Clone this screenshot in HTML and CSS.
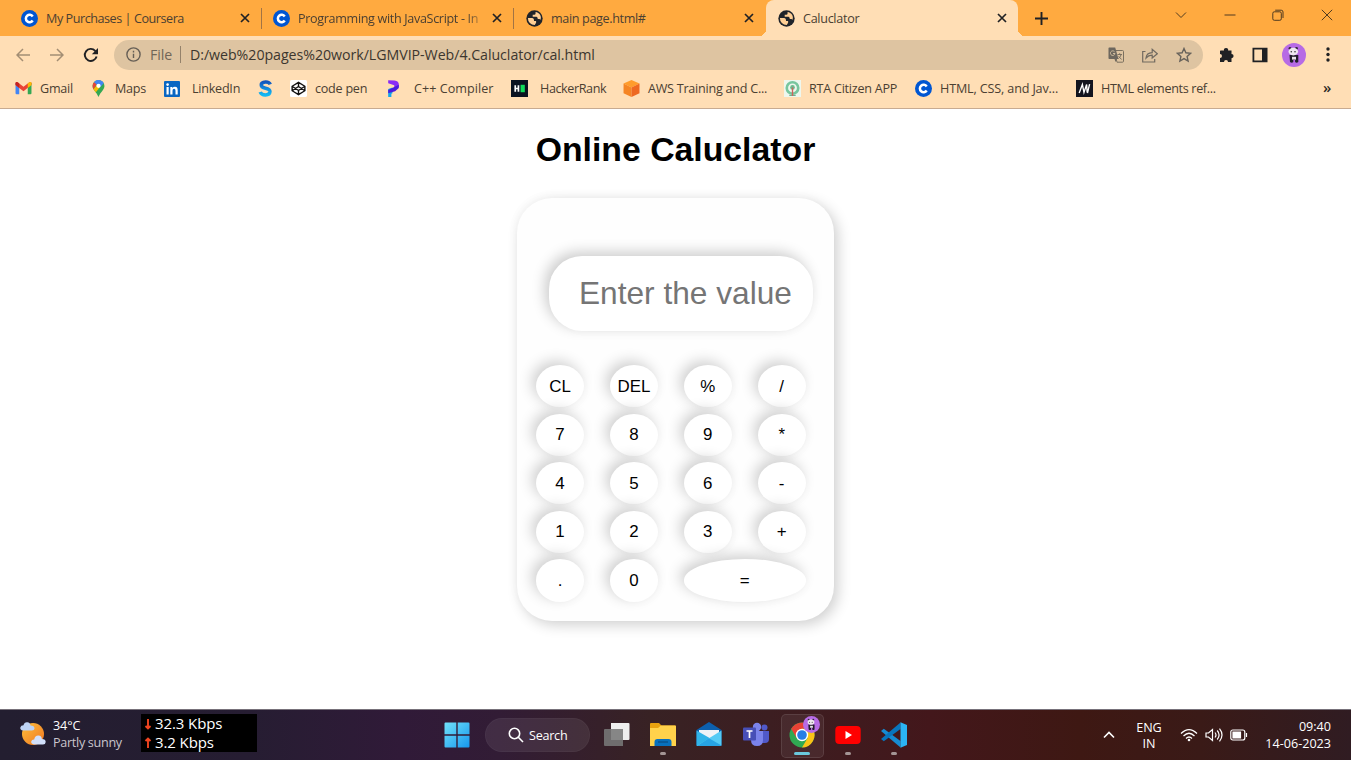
FILE: index.html
```html
<!DOCTYPE html>
<html lang="en">
<head>
<meta charset="utf-8">
<title>Caluclator</title>
<link rel="stylesheet" href="styles.css">
</head>
<body>
<svg width="0" height="0" class="defs">
  <defs>
    <symbol id="coursera" viewBox="0 0 17 17"><circle cx="8.5" cy="8.5" r="8.5" fill="#0056d2"/><path d="M11.7 6.5A3.7 3.7 0 1 0 11.7 10.5" fill="none" stroke="#fff" stroke-width="2.5"/></symbol>
    <symbol id="globe" viewBox="0 0 16 16"><circle cx="8" cy="8" r="7.7" fill="#20242a"/><path d="M1.8 7.6h4q1.500 0 1.700 1.500v1.200h2v1.800l-1.300 2A6.300 6.300 0 0 1 1.800 7.600ZM9 1.800v1.500q0 1.200-1.300 1.200H6.300v1.800h3.600q1.200.2 1.200 2.200h1.400q.8 0 1 .8C15.200 5.800 12.600 2.300 9 1.800Z" fill="#ffcf95"/></symbol>
    <symbol id="close" viewBox="0 0 10 10"><path d="m1 1 8 8m0-8-8 8" stroke="#202124" stroke-width="1.7" fill="none"/></symbol>
    <symbol id="panda" viewBox="0 0 24 24"><circle cx="12" cy="12" r="12" fill="#b76be5"/><circle cx="8" cy="5.300" r="1.400" fill="#32283b"/><circle cx="14.500" cy="5.300" r="1.400" fill="#32283b"/><path d="M7.500 12h8.800v7q-1.800 1.500-3.200 0v-2h-1.800v2q-1.500 1.500-3.300 0Z" fill="#211d29"/><ellipse cx="11.300" cy="8.600" rx="4.800" ry="3.800" fill="#eee8ef"/><circle cx="9.300" cy="8.800" r=".8" fill="#333"/><circle cx="13" cy="8.800" r=".8" fill="#333"/><path d="M10 13.800h4v2.800h-4z" fill="#e9e2ea"/></symbol>
  </defs>
</svg>

<header class="browser">
  <div class="tabs">
    <div class="tab"><svg class="fav"><use href="#coursera"/></svg><span class="tab-title">My Purchases | Coursera</span><svg class="x"><use href="#close"/></svg></div>
    <div class="tab"><svg class="fav"><use href="#coursera"/></svg><span class="tab-title fade">Programming with JavaScript - In</span><svg class="x"><use href="#close"/></svg></div>
    <div class="tab last"><svg class="fav"><use href="#globe"/></svg><span class="tab-title">main page.html#</span><svg class="x"><use href="#close"/></svg></div>
    <div class="tab active"><svg class="fav"><use href="#globe"/></svg><span class="tab-title">Caluclator</span><svg class="x"><use href="#close"/></svg></div>
    <svg class="plus" viewBox="0 0 13 13"><path d="M6.5 0v13M0 6.5h13" stroke="#202124" stroke-width="1.9"/></svg>
    <div class="window-buttons">
      <svg viewBox="0 0 12 12"><path d="m1 3.5 5 5 5-5"/></svg>
      <svg viewBox="0 0 12 12"><path d="M.5 6h11"/></svg>
      <svg viewBox="0 0 12 12"><rect x=".8" y="2.8" width="8.5" height="8.5" rx="1.5"/><path d="M3.2 1.2h6q1.8 0 1.8 1.8v6"/></svg>
      <svg viewBox="0 0 12 12"><path d="m.8.8 10.4 10.4m0-10.4L.8 11.2"/></svg>
    </div>
  </div>

  <div class="toolbar">
    <svg class="nav dim" viewBox="0 0 14 14"><path d="M14 7H1m6-6L1 7l6 6"/></svg>
    <svg class="nav dim" viewBox="0 0 14 14"><path d="M0 7h13M7 1l6 6-6 6"/></svg>
    <svg class="nav reload" viewBox="0 0 16 16"><path d="M13.6 9.5A6 6 0 1 1 12.2 3.8L14 5.6"/><path class="solid" d="M15 1v6.2H8.8Z"/></svg>
    <div class="omnibox">
      <svg class="info" viewBox="0 0 15 15"><circle cx="7.5" cy="7.5" r="6.6"/><path d="M7.5 6.7v4.3M7.5 3.8v1.6"/></svg>
      <span class="scheme">File</span><i class="bar"></i><span class="url">D:/web%20pages%20work/LGMVIP-Web/4.Caluclator/cal.html</span>
      <div class="actions">
        <svg viewBox="0 0 16 16"><path d="M6 3.5h8.5q1 0 1 1v9.700q0 1-1 1H9L6 3.5Z" fill="none" stroke="#7b705f"/><path d="M1.200.500h6L10.500 12h-9.300Q.5 12 .5 11.300V1.200Q.5.500 1.200.500ZM9 12l-1.500 3-1-3Z" fill="#6d675e"/><path d="M6.500 4.700A2.300 2.300 0 1 0 7 6.500H5" fill="none" stroke="#cfbb9c"/><path d="M9.500 7.500h4.500m-2.300-1.300v1.300m1.500 0q-.8 2.600-2.700 4m.1-2.200 3 3.200" fill="none" stroke="#7b705f"/></svg>
        <svg viewBox="0 0 16 16"><path d="M3.500 4.500H.700V15h12v-3M4 11q.5-5 6.200-5.300V2.300L15.300 6.700l-5.100 4.200V8.100Q6.500 8 4 11Z" fill="none" stroke="#716a60" stroke-width="1.200"/></svg>
        <svg viewBox="0 0 16 16"><path d="m8 1.500 1.900 4.300 4.700.5-3.500 3.100 1 4.600L8 11.600 3.900 14l1-4.600-3.500-3.100 4.700-.5Z" fill="none" stroke="#67625b" stroke-width="1.400"/></svg>
      </div>
    </div>
    <svg class="tool puzzle" viewBox="0 0 16 16"><path d="M1.500 3.500H5a2.100 2.100 0 1 1 4.100 0h3.400V7a2.100 2.100 0 1 1 0 4.200V15H9a2 2 0 1 0-4 0H1V11a2 2 0 1 0 0-4V4Z" fill="#202124"/></svg>
    <svg class="tool panel" viewBox="0 0 16 16"><path fill-rule="evenodd" d="M.5.800h15v14.400H.5ZM2.300 2.600v10.800H10V2.600Z" fill="#202124"/></svg>
    <svg class="avatar"><use href="#panda"/></svg>
    <svg class="dots" viewBox="0 0 4 15"><circle cx="2" cy="2" r="1.700"/><circle cx="2" cy="7.500" r="1.700"/><circle cx="2" cy="13" r="1.700"/></svg>
  </div>

  <nav class="bookmarks">
    <a class="bm gmail"><svg viewBox="0 0 16 16"><path d="M.5 2.500 4 5v8.500H1.500q-1 0-1-1Z" fill="#4285f4"/><path d="M15.500 2.500 12 5v8.500h2.500q1 0 1-1Z" fill="#34a853"/><path d="M.5 4V3q0-1.500 2-1L8 6.400 13.500 2q2-.5 2 1v1.500L8 10.500.500 5Z" fill="#ea4335"/><path d="M12 3.200 13.500 2q2-.5 2 1v1.800L12 7.500Z" fill="#fbbc04"/><path d="M.5 4.500V3q.2-1.500 2-.8L4 3.300V7.500Z" fill="#c5221f"/></svg>Gmail</a>
    <a class="bm maps"><svg viewBox="0 0 16 16"><path d="M8 0a5.600 5.600 0 0 1 5.600 5.600C13.600 9 10 11 8 16 6 11 2.400 9 2.400 5.600A5.600 5.600 0 0 1 8 0Z" fill="#34a853"/><path d="M3.700 2A5.600 5.600 0 0 1 9.500.200L5.700 5Z" fill="#4285f4"/><path d="M3.700 2 6.300 4.200 3.200 8.600Q1.500 5 3.700 2Z" fill="#ea4335"/><path d="m3.200 8.600 3.400-4L10.800 5 5.500 11.500Z" fill="#fbbc04"/><path d="M9.500.200q2.300.5 3.500 2.600L9.900 6.500 8 3.600 5.900 4Z" fill="#4285f4"/><circle cx="8" cy="5.500" r="2" fill="#fff"/></svg>Maps</a>
    <a class="bm linkedin"><svg viewBox="0 0 16 16"><rect width="16" height="16" rx="1" fill="#0a66c2"/><path d="M2.500 6h2.200v7.500H2.500ZM6.300 6h2.100v1.200Q9.200 5.800 11 5.800q2.700 0 2.700 3.400v4.300h-2.200V9.700q0-2-1.400-2-1.600 0-1.600 2v3.800H6.300Z" fill="#fff"/><circle cx="3.600" cy="3.600" r="1.300" fill="#fff"/></svg>LinkedIn</a>
    <a class="bm scaler"><svg viewBox="0 0 16 16"><defs><linearGradient id="sg" x2="0" y2="1"><stop stop-color="#1356bd"/><stop offset=".5" stop-color="#138bdd"/><stop offset="1" stop-color="#13b9f3"/></linearGradient></defs><path d="M12.500 4.200Q11.500 1.700 8 1.800 3.900 2 4 4.700 4 7 8 7.700q4.300.8 4.200 3.300Q12 14 8 14.100 4 14.200 3 11.300" fill="none" stroke="url(#sg)" stroke-width="3.300"/></svg></a>
    <a class="bm codepen"><svg viewBox="0 0 16 16"><rect width="16" height="16" rx="1.500" fill="#fff"/><path d="m8 2.200 6 3.700v4.200l-6 3.700-6-3.700V5.900ZM2 5.900l6 4 6-4M2 10.100l6-4 6 4M8 2.200v3.900m0 3.800v3.900" fill="none" stroke="#111" stroke-width="1.300"/></svg>code pen</a>
    <a class="bm cpp"><svg viewBox="0 0 16 16"><path d="M3 8.500 7 7v5.500L6 13v3H3Z" fill="#12a6ed"/><path d="M3 .3 9 .500q4 .8 4 3.500v2.500L8.700 8V5L3 3Z" fill="#8a2cf5"/><path d="m3 9.500 10-5v3L9.500 10.500 3 12.500Z" fill="#4b1bdc"/></svg>C++ Compiler</a>
    <a class="bm hacker"><svg viewBox="0 0 16 16"><path fill="#0b1320" d="M0 0h16v16H0z"/><path d="M4 5v6m3-6v6M4 8h3" stroke="#fff" stroke-width="1.600"/><path fill="#10dc5a" d="M9 4.500h4v7H9z"/></svg>HackerRank</a>
    <a class="bm aws"><svg viewBox="0 0 16 16"><path d="m8 0 7.500 3.300L8 7 .5 3.300Z" fill="#ff9c2b"/><path d="M.5 3.300 8 7v9L.5 12.500Z" fill="#f58524"/><path d="M15.500 3.300 8 7v9l7.500-3.500Z" fill="#ee6820"/></svg>AWS Training and C...</a>
    <a class="bm rta"><svg viewBox="0 0 16 16"><path fill="#eef7ee" d="M0 0h16v16H0z"/><circle cx="8" cy="7.500" r="5.400" fill="none" stroke="#77c69e" stroke-width="2.500"/><path d="M5 14.500h6" stroke="#64ae87"/><circle cx="8" cy="7" r="2.200" fill="#6db98f"/><path d="M8 7v8" stroke="#cf635c" stroke-width="1.300"/></svg>RTA Citizen APP</a>
    <a class="bm html"><svg><use href="#coursera"/></svg>HTML, CSS, and Jav...</a>
    <a class="bm mdn"><svg viewBox="0 0 16 16"><path fill="#14151f" d="M0 0h16v16H0z"/><path d="M3 12.300 6 4.200l1.500 7.500L10 4.200l.5 7.500M12.800 3.800 10.800 12.300" fill="none" stroke="#fff" stroke-width="1.300"/></svg>HTML elements ref...</a>
    <span class="more">»</span>
  </nav>
</header>

<main class="page">
  <h1>Online Caluclator</h1>
  <form class="calculator">
    <input class="display" type="text" placeholder="Enter the value">
    <div class="keys">
      <button type="button">CL</button><button type="button">DEL</button><button type="button">%</button><button type="button">/</button>
      <button type="button">7</button><button type="button">8</button><button type="button">9</button><button type="button">*</button>
      <button type="button">4</button><button type="button">5</button><button type="button">6</button><button type="button">-</button>
      <button type="button">1</button><button type="button">2</button><button type="button">3</button><button type="button">+</button>
      <button type="button">.</button><button type="button">0</button><button type="button" class="equals">=</button>
    </div>
  </form>
</main>

<footer class="taskbar">
  <div class="weather">
    <svg viewBox="0 0 26 26"><defs><linearGradient id="sun" x2="1" y2="1"><stop stop-color="#ffc03a"/><stop offset="1" stop-color="#ef7622"/></linearGradient></defs><circle cx="13" cy="13" r="11" fill="url(#sun)"/><path d="M3 9.500Q0 9.200.3 6.500.8 4.400 3.500 4.300 4.300 1 7.300 1.300q3 .4 3.200 3.200 4 .1 4 2.900-.1 2.100-2.500 2.100Z" fill="#bdd3f5"/><path d="M14 23.500q-3-.3-2.800-2.900.4-2.300 3-2.200.7-4 4.400-3.800 3 .3 3.300 3.300 3.800.2 3.800 3-.2 2.600-2.700 2.600Z" fill="#d1e0fb"/></svg>
    <p><span>34°C</span><span class="soft">Partly sunny</span></p>
  </div>
  <div class="speed">
    <p><svg viewBox="0 0 8 12"><path d="M4 1v9M1.500 8 4 10.500 6.500 8"/></svg>32.3 Kbps</p>
    <p><svg viewBox="0 0 8 12"><path d="M4 11V2M1.500 4 4 1.500 6.500 4"/></svg>3.2 Kbps</p>
  </div>
  <div class="apps">
    <svg class="start" viewBox="0 0 26 26"><defs><linearGradient id="win" gradientUnits="userSpaceOnUse" x2="26" y2="26"><stop stop-color="#73e4fa"/><stop offset="1" stop-color="#1495ed"/></linearGradient></defs><path d="M1.500.5h10.800v11.800H.5V1.500q0-1 1-1Zm12.200 0h10.800q1 0 1 1v10.800H13.700ZM.5 13.700h11.800v11.800H1.500q-1 0-1-1Zm13.200 0h11.800v10.800q0 1-1 1H13.700Z" fill="url(#win)"/></svg>
    <div class="search"><svg viewBox="0 0 16 16"><circle cx="6.500" cy="6.500" r="5.200"/><path d="m10.300 10.300 4.700 4.700"/></svg>Search</div>
    <svg class="app" viewBox="0 0 26 26"><path d="M7 1h17.500q1 0 1 1v15q0 1-1 1H7Z" fill="#eee"/><path d="M1 7h18v17H1q-1 0-1-1V8q0-1 1-1Z" fill="#787878" opacity=".88"/></svg>
    <div class="running"><svg class="app" viewBox="0 0 26 26"><path d="M1 1h8l2.500 2.500H25q1 0 1 1V23q0 1-1 1H1q-1 0-1-1V2q0-1 1-1Z" fill="#e8a20f"/><path d="M0 6h8l3-2.500h14q1 0 1 1V24H0Z" fill="#ffd24b"/><path d="M4.500 24v-4q0-3 3-3h11q3 0 3 3v4Z" fill="#0870bd"/><path d="M8 20h10" stroke="#074c84" stroke-width="1.200"/></svg></div>
    <svg class="app" viewBox="0 0 26 26"><path d="M.5 8 13 0l12.500 8v15q0 1-1 1h-23q-1 0-1-1Z" fill="#0c5fad"/><path d="M3 8h20v5L13 17 3 13Z" fill="#eef3f7"/><path d="M.5 8.500 17 18v6H1.500q-1 0-1-1Z" fill="#31b4e8"/><path d="M25.500 8.500.5 24h24q1 0 1-1Z" fill="#54cbf5"/><path d="m13 16.200 12.500 7.400-1 .4H1Z" fill="#27a4e4"/></svg>
    <svg class="app" viewBox="0 0 26 26"><circle cx="21.500" cy="5.500" r="3" fill="#5059c9"/><path d="M18 9h8v8q0 4-4 4h-4Z" fill="#5059c9"/><circle cx="14" cy="5" r="4.200" fill="#7b83eb"/><path d="M8 9h12v9q0 6-6 6t-6-6Z" fill="#7b83eb"/><rect y="5.500" width="13" height="13" rx="1" fill="#474fb7"/><path d="M3.500 9h6M6.500 9v7" stroke="#fff" stroke-width="1.700"/></svg>
    <div class="running current"><svg class="app" viewBox="0 0 26 26"><circle cx="13" cy="13" r="12.500" fill="#30a952"/><path d="M2.200 6.700A12.500 12.500 0 0 1 23.800 6.700H13L7.600 16Z" fill="#e94235"/><path d="M13 6.700h10.800A12.500 12.500 0 0 1 13 25.500l5.500-9.300Z" fill="#fbc316"/><circle cx="13" cy="13" r="6.200" fill="#fff"/><circle cx="13" cy="13" r="4.800" fill="#287de5"/></svg><svg class="badge"><use href="#panda"/></svg></div>
    <div class="running"><svg class="app" viewBox="0 0 26 26"><rect x=".3" y="4" width="25.400" height="18" rx="4" fill="#f00"/><path d="m10.500 9 6.500 4-6.500 4Z" fill="#fff"/></svg></div>
    <div class="running"><svg class="app" viewBox="0 0 26 26"><path d="m0 9 2.800-2.200L19.500 19v6.500Z" fill="#168bd2"/><path d="m0 17 2.800 2.200L19.500 7V.500Z" fill="#0875bd"/><path d="M19.500.3 26 3v20l-6.500 2.700Z" fill="#2bb4f4"/></svg></div>
  </div>
  <div class="tray">
    <svg class="chevron" viewBox="0 0 12 8"><path d="m1 6.500 5-5 5 5"/></svg>
    <p class="lang"><span>ENG</span><span>IN</span></p>
    <svg class="wifi" viewBox="0 0 18 14"><path d="M1 5.500q8-8 16 0M3.500 8q5.500-5.500 11 0M6 10.500q3-3 6 0"/><circle cx="9" cy="12" r="1.300" fill="#fff" stroke="none"/></svg>
    <svg class="volume" viewBox="0 0 18 14"><path d="M1 5h2.500l4-3.500v11L3.500 9H1ZM10 4.500q2 2.500 0 5m2.200-7q3.800 4.500 0 9m2.300-10.800q5 6.300 0 12.600"/></svg>
    <svg class="battery" viewBox="0 0 18 14"><rect x=".8" y="2" width="14" height="10" rx="2"/><path d="M3 4h7.500v6H3Z" fill="#fff"/><path d="M16.500 5v4"/></svg>
    <p class="clock"><span>09:40</span><span>14-06-2023</span></p>
  </div>
</footer>
</body>
</html>
```

FILE: styles.css
```css
* { box-sizing: border-box; }
body {
  margin: 0;
  width: 1351px;
  height: 760px;
  overflow: hidden;
  display: flex;
  flex-direction: column;
  background: #fff;
  font: 12.6px/17px "Open Sans", "Noto Sans", sans-serif;
  letter-spacing: -0.25px;
  color: #4b4032;
}
p { margin: 0; }
svg { display: block; flex: none; }
.defs { position: absolute; }

/* Browser window */
.browser { height: 109px; background: #ffdeb5; border-bottom: 1px solid #c8ab91; flex: none; }
.tabs { display: flex; height: 36px; background: #ffaa40; padding-left: 10px; }
.tab { display: flex; align-items: center; width: 252px; padding: 0 12px 0 11px; position: relative; letter-spacing: -.45px; }
.tab:not(.last):not(.active)::after { content: ""; position: absolute; right: 0; top: 8px; width: 1px; height: 21px; background: #a27444; }
.fav { width: 17px; height: 17px; }
.tab-title { margin-left: 8px; flex: 1; white-space: nowrap; }
.fade { letter-spacing: -.34px; mask-image: linear-gradient(90deg, #000 168px, transparent 190px); }
.x { width: 10px; height: 10px; margin-left: 8px; }
.tab.last { padding-left: 12px; letter-spacing: -.36px; }
.tab.active { background: #ffdeb5; border-radius: 8px 8px 0 0; padding: 0 11px 0 12px; letter-spacing: -.3px; }
.tab.active::before, .tab.active::after { content: ""; position: absolute; bottom: 0; width: 7px; height: 7px; }
.tab.active::before { left: -7px; background: radial-gradient(circle at 0 0, transparent 7px, #ffdeb5 7px); }
.tab.active::after { right: -7px; background: radial-gradient(circle at 100% 0, transparent 7px, #ffdeb5 7px); }
.plus { width: 13px; height: 13px; margin: 12px 0 0 17px; }
.window-buttons { display: flex; gap: 36.4px; margin-left: auto; padding: 9px 18.500px 0 0; }
.window-buttons svg { width: 12px; height: 12px; fill: none; stroke: #503b20; stroke-width: 1; }

.toolbar { display: flex; align-items: center; height: 37px; padding-left: 16px; }
.nav { width: 14px; height: 14px; fill: none; stroke: #a38e74; stroke-width: 1.5; margin-right: 20px; }
.nav.reload { width: 16px; height: 16px; margin-left: -1px; stroke: #202124; stroke-width: 1.900; margin-right: 16px; }
.nav .solid { fill: #202124; stroke: none; }
.omnibox { display: flex; align-items: center; width: 1089px; height: 30px; margin-left: -1px; border-radius: 15px; background: #dec4a1; padding: 0 11px 0 12px; font-size: 14.200px; letter-spacing: -0.040px; }
.info { width: 15px; height: 15px; fill: none; stroke: #665f56; stroke-width: 1.400; }
.scheme { width: 30px; margin-left: 9px; color: #706657; }
.bar { width: 1px; height: 17px; background: #94826b; }
.url { margin-left: 9px; color: #3c362e; }
.actions { display: flex; gap: 18px; margin-left: auto; }
.actions svg { width: 16px; height: 16px; }
.puzzle { width: 16px; height: 16px; margin-left: 16px; }
.panel { width: 16px; height: 16px; margin-left: 17px; }
.avatar { width: 24px; height: 24px; margin-left: 14px; }
.dots { width: 4px; height: 15px; margin-left: 20px; fill: #202124; }

.bookmarks { display: flex; align-items: center; height: 31px; padding-left: 15px; }
.bm { display: flex; align-items: center; gap: 8px; white-space: nowrap; }
.bm svg { width: 17px; height: 17px; }
.gmail { width: 75px; }
.maps { width: 74px; }
.linkedin { width: 93px; gap: 12px; }
.linkedin svg { width: 16px; height: 16px; }
.scaler { width: 33px; }
.codepen { width: 95px; }
.cpp { width: 126px; gap: 12px; letter-spacing: .03px; }
.hacker { width: 112px; gap: 12px; letter-spacing: -.4px; }
.aws { width: 161px; gap: 8px; }
.rta { width: 131px; gap: 8px; }
.html { width: 161px; gap: 8px; letter-spacing: -.15px; }
.mdn { gap: 8px; letter-spacing: -.33px; }
.more { margin: -3px 20px 0 auto; font-size: 15px; font-weight: 600; color: #2d2924; }

/* Calculator page */
.page { height: 600px; flex: none; display: flex; flex-direction: column; align-items: center; font-family: "Liberation Sans", Arial, sans-serif; letter-spacing: 0; background: #fff; }
h1 { margin: 20px 0 28px; font-size: 33.770px; line-height: 41px; color: #000; white-space: nowrap; }
.calculator { width: 317px; height: 422.500px; border-radius: 35px; background: #fefefe; box-shadow: 4px 4px 14px rgba(0,0,0,.19), -3px -3px 10px rgba(0,0,0,.02); padding: 58px 0 0 19px; }
.display { display: block; width: 263.500px; height: 75px; margin-left: 13px; border: 0; border-radius: 33px; padding: 0 0 0 30px; background: #fff; font: 31.660px "Liberation Sans", Arial, sans-serif; box-shadow: -4px -4px 14px rgba(0,0,0,.2), 3px 3px 10px rgba(0,0,0,.01); }
.display::placeholder { color: #757575; opacity: 1; }
.keys { display: grid; grid-template-columns: repeat(4, 48px); grid-auto-rows: 42.200px; gap: 6.400px 25.900px; margin-top: 34px; }
.keys button { border: 0; padding: 1px 0 0; border-radius: 50%; background: #fff; color: #000; font: 16.900px "Liberation Sans", Arial, sans-serif; box-shadow: -4px -4px 14px rgba(0,0,0,.19), 3px 3px 10px rgba(0,0,0,.01); }
.keys .equals { grid-column: span 2; }

/* Taskbar */
.taskbar { height: 51px; flex: none; display: flex; position: relative; border-top: 1px solid #77717a; color: #fff; letter-spacing: -.1px; background: linear-gradient(90deg, #231e30 0, #261d32 250px, #301a38 400px, #321c35 500px, #382224 650px, #3c1e21 770px, #43171b 930px, #3e1813 1080px, #3a1a17 1200px, #301c22 1351px); }
.weather { display: flex; width: 141px; padding: 11px 0 0 20px; gap: 7px; }
.weather svg { width: 26px; height: 26px; }
.weather p, .clock, .lang { display: flex; flex-direction: column; }
.weather p { margin-top: -4px; white-space: nowrap; }
.soft { color: #c9c5cd; letter-spacing: -.3px; }
.speed { width: 116px; height: 38px; margin-top: 4px; padding-left: 3px; background: #000; font-size: 15px; line-height: 19px; letter-spacing: -.1px; }
.speed p { display: flex; align-items: center; gap: 3px; }
.speed svg { width: 8px; height: 12px; fill: none; stroke: #f04420; stroke-width: 1.900; }
.apps { display: flex; align-items: center; margin-left: 187px; height: 50px; }
.start { width: 26px; height: 26px; }
.search { display: flex; align-items: center; gap: 5px; width: 105px; height: 34px; margin: 0 14px 0 15px; padding-left: 22px; border-radius: 17px; background: rgba(255,255,255,.08); border: 1px solid rgba(255,255,255,.03); letter-spacing: -.25px; }
.search svg { width: 16px; height: 16px; fill: none; stroke: #fff; stroke-width: 1.600; }
.app { width: 26px; height: 26px; margin-right: 20.200px; }
.running { position: relative; }
.running::after { content: ""; position: absolute; left: 10px; top: 30px; width: 6px; height: 3px; border-radius: 2px; background: #a49595; }
.current::before { content: ""; position: absolute; left: -8px; top: -8px; width: 41px; height: 42px; border: 1px solid rgba(255,255,255,.1); border-radius: 5px; background: rgba(255,255,255,.06); }
.current::after { left: 5px; width: 16px; background: #6bc8dc; }
.current .app { position: relative; }
.badge { position: absolute; width: 17px; height: 17px; left: 14px; top: -6px; }
.badge use { transform: scale(1); }
.tray { display: flex; align-items: center; margin-left: auto; height: 50px; padding-right: 20px; }
.tray svg { fill: none; stroke: #fff; stroke-width: 1.200; }
.tray .chevron { width: 12px; height: 8px; stroke-width: 1.600; }
.lang { width: 30px; margin: 1px 16px 0 19px; text-align: center; line-height: 16px; }
.wifi, .volume, .battery { width: 18px; height: 14px; }
.volume, .battery { margin-left: 7px; }
.clock { width: 83px; text-align: right; line-height: 17px; margin-top: -1px; letter-spacing: 0; }
```
